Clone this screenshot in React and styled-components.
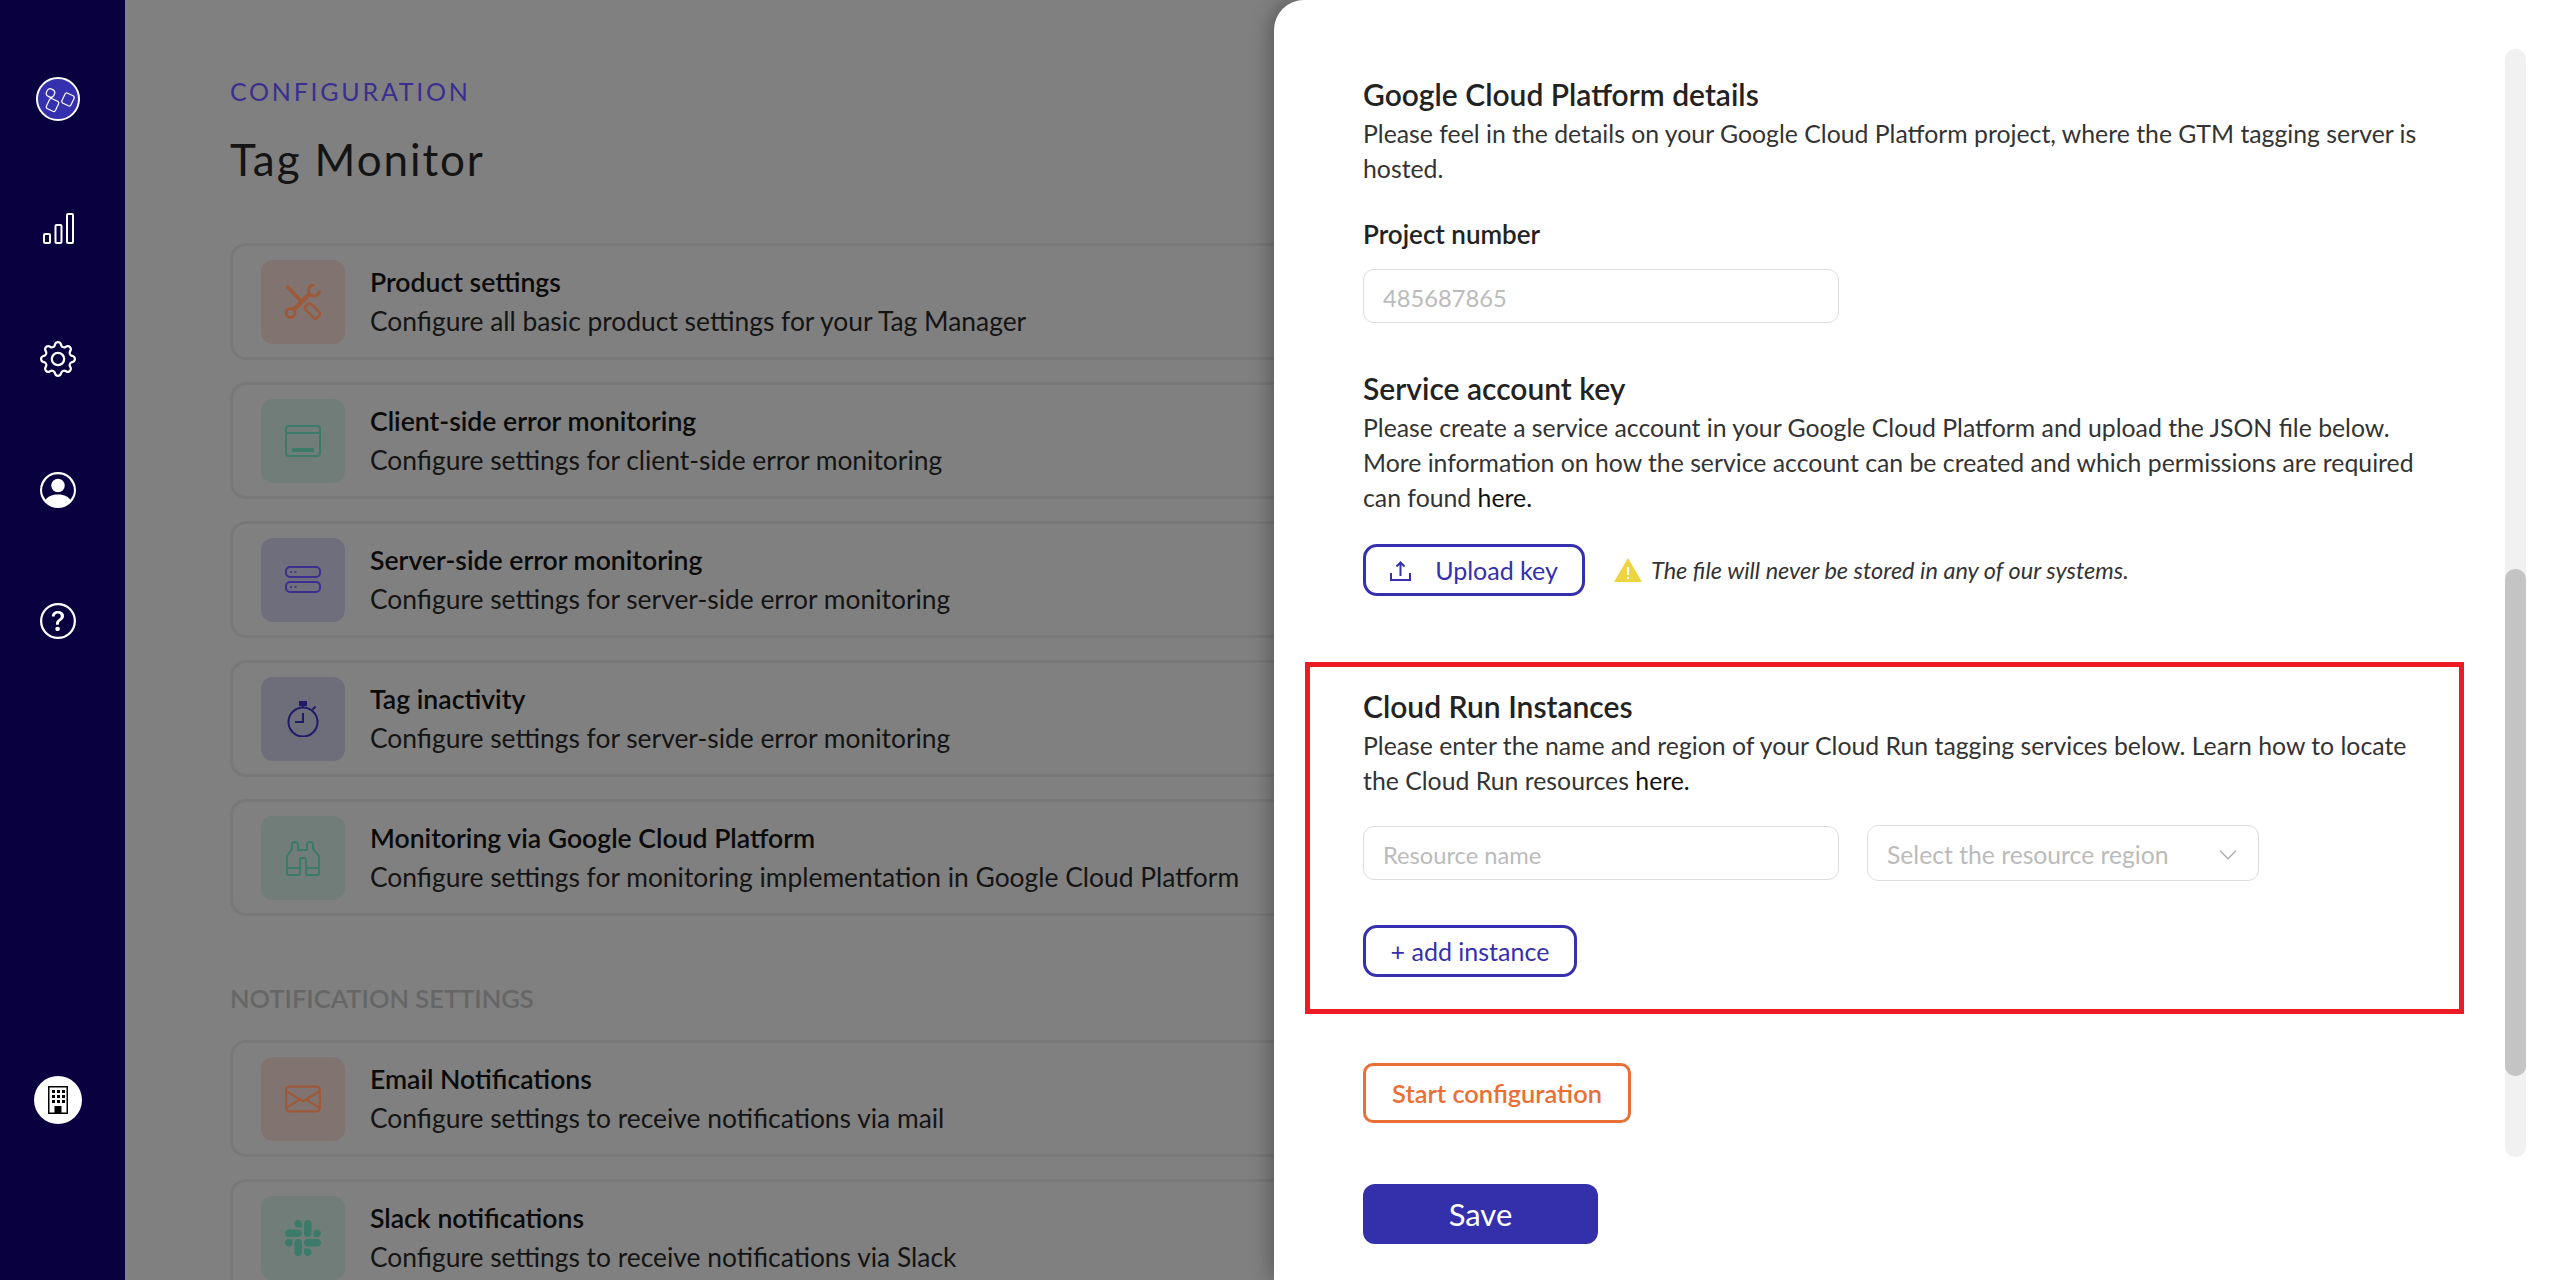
import React from 'react'
import styled, { createGlobalStyle } from 'styled-components'
import {
  BsChevronDown,
  BsEnvelope,
  BsGear,
  BsPersonCircle,
  BsQuestionCircle,
  BsSlack,
} from 'react-icons/bs'

const GlobalStyle = createGlobalStyle`
  html, body, #root {
    height: 100%;
    margin: 0;
  }
  body {
    font-family: Lato, "Noto Sans", sans-serif;
    overflow: hidden;
  }
  * {
    box-sizing: border-box;
  }
`

const LogoIcon = () => (
  <svg width="44" height="44" viewBox="0 0 44 44" fill="none" stroke="#fff" strokeWidth="1.2">
    <circle cx="22" cy="22" r="21" fill="#3530ae" strokeWidth="2" />
    <rect x="10.5" y="12" width="8" height="8" rx="3.5" transform="rotate(25 14.5 16)" />
    <rect x="27" y="17" width="10" height="11" rx="2" transform="rotate(25 32 22.5)" />
    <rect x="11.5" y="22.5" width="10" height="11" rx="2" transform="rotate(25 16.5 28)" />
  </svg>
)

const BarsIcon = () => (
  <svg width="31" height="31" viewBox="0 0 31 31" fill="none" stroke="currentColor" strokeWidth="2">
    <rect x="1" y="21" width="6" height="9" rx="1" />
    <rect x="12.5" y="12" width="6" height="18" rx="1" />
    <rect x="24" y="1" width="6" height="29" rx="1" />
  </svg>
)

const BuildingIcon = () => (
  <svg width="20" height="28" viewBox="0 0 20 28" fill="#000">
    <path d="M0 0h20v28H0zM1.5 1.5v25h17v-25z" fillRule="evenodd" />
    {[4, 9, 14].map((x) =>
      [4, 9, 14].map((y) => <rect key={`${x}${y}`} x={x} y={y} width="3" height="3" />),
    )}
    <rect x="6.5" y="20" width="7" height="7" />
  </svg>
)

const ToolsIcon = () => (
  <svg width="36" height="36" viewBox="0 0 36 36" fill="none" stroke="currentColor" strokeWidth="3">
    <circle cx="5.5" cy="29" r="4.5" />
    <path d="M9 25.5 25 9.5" strokeWidth="4" />
    <path d="M29.5 1A5.5 5.5 0 1 0 34.5 7" />
    <path d="M1.5 2 17 18" strokeWidth="3.5" />
    <rect x="19.5" y="23" width="16" height="8" rx="2" strokeWidth="2.5" transform="rotate(45 27.5 27)" />
  </svg>
)

const WindowIcon = () => (
  <svg width="36" height="32" viewBox="0 0 36 32" fill="none" stroke="currentColor" strokeWidth="2">
    <rect x="1" y="1" width="34" height="30" rx="3" />
    <path d="M1 8h34" />
    <rect x="7" y="23" width="22" height="4" fill="currentColor" stroke="none" />
  </svg>
)

const ServerIcon = () => (
  <svg width="36" height="27" viewBox="0 0 36 27" fill="none" stroke="currentColor" strokeWidth="2">
    <rect x="1" y="1" width="34" height="10" rx="4" />
    <rect x="1" y="16" width="34" height="10" rx="4" />
    <path d="M5 6h2M9.5 6h2M5 21h2M9.5 21h2" strokeWidth="1.5" />
  </svg>
)

const StopwatchIcon = () => (
  <svg width="36" height="36" viewBox="0 0 36 36" fill="none" stroke="currentColor" strokeWidth="2">
    <circle cx="18" cy="21" r="14.5" />
    <rect x="15" y="1" width="6" height="3" fill="currentColor" />
    <path d="M18 4v2M27.5 8.5l3-3" />
    <path d="M18 12v9h-8" />
  </svg>
)

const BinocularsIcon = () => (
  <svg width="36" height="36" viewBox="0 0 36 36" fill="none" stroke="currentColor" strokeWidth="2">
    <path d="M7 9V4.5A2.5 2.5 0 0 1 9.500 2h1A2.500 2.500 0 0 1 13 4.500V10h9V4.500A2.500 2.500 0 0 1 24.500 2h1A2.500 2.500 0 0 1 28 4.500V9l6 7v17a2 2 0 0 1-2 2h-9a2 2 0 0 1-2-2V20a2 2 0 0 0-2-2h-2a2 2 0 0 0-2 2v13a2 2 0 0 1-2 2H4a2 2 0 0 1-2-2V16z" />
    <path d="M2 28h13M21 28h13" />
  </svg>
)

const UploadIcon = () => (
  <svg width="21" height="21" viewBox="0 0 21 21" fill="none" stroke="currentColor" strokeWidth="2">
    <path d="M10.500 16V3M6.500 6.500l4-4 4 4" />
    <path d="M1 13v7h19v-7" />
  </svg>
)

const WarningIcon = () => (
  <svg width="28" height="24" viewBox="0 0 28 24">
    <path d="M14 0 28 24H0z" fill="#ecd540" />
    <path d="M14 9v8M14 19v2" stroke="#fff" strokeWidth="2" />
  </svg>
)

const generalItems = [
  { title: 'Product settings', text: 'Configure all basic product settings for your Tag Manager', tone: 'orange', icon: <ToolsIcon /> },
  { title: 'Client-side error monitoring', text: 'Configure settings for client-side error monitoring', tone: 'green', icon: <WindowIcon /> },
  { title: 'Server-side error monitoring', text: 'Configure settings for server-side error monitoring', tone: 'purple', icon: <ServerIcon /> },
  { title: 'Tag inactivity', text: 'Configure settings for server-side error monitoring', tone: 'navy', icon: <StopwatchIcon /> },
  { title: 'Monitoring via Google Cloud Platform', text: 'Configure settings for monitoring implementation in Google Cloud Platform', tone: 'green', icon: <BinocularsIcon /> },
]

const notificationItems = [
  { title: 'Email Notifications', text: 'Configure settings to receive notifications via mail', tone: 'orange', icon: <BsEnvelope size={36} /> },
  { title: 'Slack notifications', text: 'Configure settings to receive notifications via Slack', tone: 'green', icon: <BsSlack size={36} /> },
]

const SettingsCard = ({ item }) => (
  <Card>
    <IconBox $tone={item.tone}>{item.icon}</IconBox>
    <div>
      <CardTitle>{item.title}</CardTitle>
      <CardText>{item.text}</CardText>
    </div>
  </Card>
)

const App = () => {
  return (
    <Page>
      <GlobalStyle />
      <Sidebar>
        <LogoIcon />
        <NavItem $top={92}><BarsIcon /></NavItem>
        <NavItem $top={97}><BsGear size={36} /></NavItem>
        <NavItem $top={95}><BsPersonCircle size={36} /></NavItem>
        <NavItem $top={95}><BsQuestionCircle size={36} /></NavItem>
        <CompanyButton><BuildingIcon /></CompanyButton>
      </Sidebar>

      <Main>
        <Eyebrow>CONFIGURATION</Eyebrow>
        <PageTitle>Tag Monitor</PageTitle>
        <CardList>
          {generalItems.map((item) => <SettingsCard key={item.title} item={item} />)}
        </CardList>
        <SectionLabel>NOTIFICATION SETTINGS</SectionLabel>
        <CardList>
          {notificationItems.map((item) => <SettingsCard key={item.title} item={item} />)}
        </CardList>
      </Main>

      <Panel>
        <PanelBody>
          <Section>
            <Heading>Google Cloud Platform details</Heading>
            <Paragraph>
              Please feel in the details on your Google Cloud Platform project, where the GTM tagging server is hosted.
            </Paragraph>
            <FieldLabel>Project number</FieldLabel>
            <Field $width={476}>
              <Placeholder>485687865</Placeholder>
            </Field>
          </Section>

          <KeySection>
            <Heading>Service account key</Heading>
            <Paragraph>
              Please create a service account in your Google Cloud Platform and upload the JSON file below.
              More information on how the service account can be created and which permissions are required
              can found <Strong>here.</Strong>
            </Paragraph>
            <UploadRow>
              <OutlineButton $width={222}>
                <UploadIcon />
                Upload key
              </OutlineButton>
              <WarningIcon />
              <Note>The file will never be stored in any of our systems.</Note>
            </UploadRow>
          </KeySection>

          <Highlight>
            <Heading>Cloud Run Instances</Heading>
            <Paragraph>
              Please enter the name and region of your Cloud Run tagging services below. Learn how to locate
              the Cloud Run resources <Strong>here.</Strong>
            </Paragraph>
            <InstanceRow>
              <Field $width={476}>
                <Placeholder>Resource name</Placeholder>
              </Field>
              <SelectField>
                <SelectPlaceholder>Select the resource region</SelectPlaceholder>
                <BsChevronDown size={20} />
              </SelectField>
            </InstanceRow>
            <OutlineButton $width={214}>+ add instance</OutlineButton>
          </Highlight>

          <StartButton>Start configuration</StartButton>
          <SaveButton>Save</SaveButton>
        </PanelBody>

        <ScrollTrack>
          <ScrollThumb />
        </ScrollTrack>
      </Panel>
    </Page>
  )
}

const Page = styled.div`
  position: relative;
  display: flex;
  height: 1280px;
  overflow: hidden;
  background: #808080;
`

const Sidebar = styled.nav`
  flex: 0 0 125px;
  display: flex;
  flex-direction: column;
  align-items: center;
  padding: 77px 9px 156px 0;
  background: #08003f;
  color: #fff;
`

const NavItem = styled.div`
  display: flex;
  margin-top: ${(p) => p.$top}px;
`

const CompanyButton = styled.div`
  display: flex;
  align-items: center;
  justify-content: center;
  width: 48px;
  height: 48px;
  margin-top: auto;
  border-radius: 50%;
  background: #fff;
`

const Main = styled.main`
  flex: 1;
  min-width: 0;
  padding: 76px 0 0 105px;
`

const Eyebrow = styled.div`
  font-size: 25px;
  line-height: 30px;
  letter-spacing: 2.75px;
  color: #3a2f90;
`

const PageTitle = styled.h1`
  margin: 23px 0 54px;
  font-size: 44px;
  line-height: 60px;
  font-weight: 400;
  letter-spacing: 1.9px;
  color: #141414;
`

const CardList = styled.div`
  display: flex;
  flex-direction: column;
  gap: 22px;
`

const Card = styled.div`
  display: flex;
  align-items: center;
  gap: 25px;
  height: 117px;
  padding-left: 28px;
  border: 3px solid #787878;
  border-radius: 16px;
`

const tones = {
  orange: { bg: '#807370', fg: '#9e5a38' },
  green: { bg: '#717d79', fg: '#3c7a6a' },
  purple: { bg: '#6f6e7c', fg: '#3d2f8f' },
  navy: { bg: '#6d6e79', fg: '#1f1a6a' },
}

const IconBox = styled.div`
  flex: 0 0 84px;
  display: flex;
  align-items: center;
  justify-content: center;
  height: 84px;
  border-radius: 12px;
  background: ${(p) => tones[p.$tone].bg};
  color: ${(p) => tones[p.$tone].fg};
`

const CardTitle = styled.div`
  font-size: 26.6px;
  line-height: 39px;
  font-weight: 600;
  color: #0a0a0a;
`

const CardText = styled.div`
  font-size: 26.4px;
  line-height: 39px;
  color: #141414;
  white-space: nowrap;
`

const SectionLabel = styled.div`
  margin: 67px 0 27px;
  font-size: 25.5px;
  line-height: 30px;
  font-weight: 600;
  color: #666;
`

const Panel = styled.aside`
  position: absolute;
  top: 0;
  right: 0;
  bottom: 0;
  display: flex;
  width: 1276px;
  padding-left: 89px;
  border-radius: 30px 0 0 0;
  background: #fff;
  box-shadow: -4px 0 20px rgba(0, 0, 0, 0.3);
`

const PanelBody = styled.div`
  flex: 0 0 1060px;
  min-width: 0;
  padding-top: 75px;
`

const Section = styled.section`
  color: #333;
`

const KeySection = styled(Section)`
  margin-top: 46px;
`

const Heading = styled.h2`
  margin: 0;
  font-size: 30px;
  line-height: 38px;
  font-weight: 600;
  color: #222;
`

const Paragraph = styled.p`
  max-width: 1062px;
  margin: 3px 0 0;
  font-size: 24.8px;
  line-height: 35px;
  color: #333;
`

const Strong = styled.span`
  color: #111;
`

const FieldLabel = styled.div`
  margin: 32px 0 19px;
  font-size: 26px;
  line-height: 32px;
  font-weight: 600;
  color: #222;
`

const Field = styled.div`
  display: flex;
  align-items: center;
  width: ${(p) => p.$width}px;
  height: 54px;
  padding: 3px 0 0 19px;
  border: 1.5px solid #ddd;
  border-radius: 11px;
`

const SelectField = styled(Field)`
  justify-content: space-between;
  width: 392px;
  height: 56px;
  padding-right: 20px;
  color: #aaa;
`

const Placeholder = styled.span`
  font-size: 23.7px;
  color: #bbb;
`

const SelectPlaceholder = styled(Placeholder)`
  font-size: 24.7px;
`

const UploadRow = styled.div`
  display: flex;
  align-items: center;
  margin-top: 29px;

  & > svg {
    margin-left: 29px;
    margin-right: 9px;
  }
`

const OutlineButton = styled.div`
  display: flex;
  align-items: center;
  justify-content: center;
  gap: 24px;
  width: ${(p) => p.$width}px;
  height: 52px;
  border: 3px solid #3530ae;
  border-radius: 14px;
  font-size: 25px;
  color: #3530ae;
`

const Note = styled.span`
  font-size: 23.5px;
  font-style: italic;
  color: #333;
`

const Highlight = styled.section`
  width: 1159px;
  height: 352px;
  margin: 66px 0 49px -58px;
  padding: 20px 0 0 53px;
  border: 5px solid #ed1c24;
`

const InstanceRow = styled.div`
  display: flex;
  align-items: center;
  gap: 28px;
  margin: 27px 0 44px;
`

const StartButton = styled.div`
  display: flex;
  align-items: center;
  justify-content: center;
  width: 268px;
  height: 60px;
  border: 3px solid #e96f35;
  border-radius: 10px;
  font-size: 25.4px;
  font-weight: 600;
  color: #e96f35;
`

const SaveButton = styled.div`
  display: flex;
  align-items: center;
  justify-content: center;
  width: 235px;
  height: 60px;
  margin-top: 61px;
  border-radius: 12px;
  background: #3430ab;
  font-size: 31px;
  color: #fff;
`

const ScrollTrack = styled.div`
  flex: 0 0 21px;
  height: 1108px;
  margin: 49px 0 0 82px;
  padding-top: 520px;
  border-radius: 10px;
  background: #f1f1f1;
`

const ScrollThumb = styled.div`
  height: 507px;
  border-radius: 10px;
  background: #c4c4c4;
`

export default App
